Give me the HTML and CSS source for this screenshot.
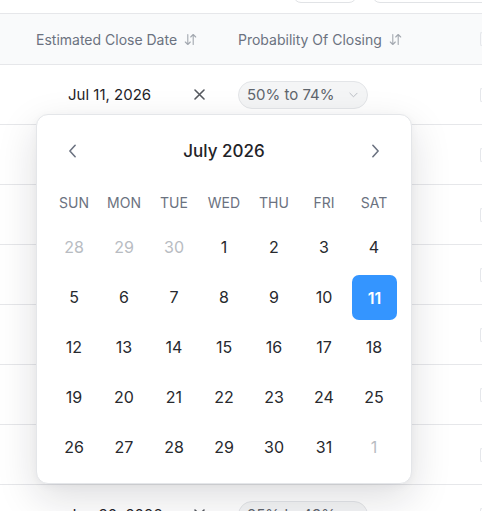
FILE: index.html
```html
<!DOCTYPE html>
<html>
<head>
<meta charset="utf-8">
<link rel="stylesheet" href="styles.css">
</head>
<body>
<div class="page">
  <div class="toolbar">
    <span class="tbtn tbtn-a"></span>
    <span class="tbtn tbtn-b"></span>
  </div>
  <div class="thead">
    <div class="cell c1">Estimated Close Date <svg class="sort" viewBox="0 0 13 13" width="13" height="13"><path d="M3.8 1.5v10M1.3 9l2.5 2.5L6.3 9M9.2 11.5v-10M6.7 4l2.5-2.5L11.7 4" fill="none" stroke="#a3a8b0" stroke-width="1.1" stroke-linecap="round" stroke-linejoin="round"/></svg></div>
    <div class="cell c2">Probability Of Closing <svg class="sort" viewBox="0 0 13 13" width="13" height="13"><path d="M3.8 1.5v10M1.3 9l2.5 2.5L6.3 9M9.2 11.5v-10M6.7 4l2.5-2.5L11.7 4" fill="none" stroke="#a3a8b0" stroke-width="1.1" stroke-linecap="round" stroke-linejoin="round"/></svg></div>
    <div class="cell c3"><span class="stub"></span></div>
  </div>
  <div class="row">
    <div class="cell c1"><span class="date">Jul 11, 2026</span><svg class="clear" viewBox="0 0 11 11" width="11" height="11"><path d="M1 1l9 9M10 1l-9 9" stroke="#55595f" stroke-width="1.6" stroke-linecap="round"/></svg></div>
    <div class="cell c2"><span class="pill">50% to 74% <svg viewBox="0 0 10 6" width="9" height="6"><path d="M1 1l4 4 4-4" fill="none" stroke="#b9bdc4" stroke-width="1.1" stroke-linecap="round" stroke-linejoin="round"/></svg></span></div>
    <div class="cell c3"><span class="stub"></span></div>
  </div>
  <div class="row"><div class="cell c1"></div><div class="cell c2"></div><div class="cell c3"><span class="stub"></span></div></div>
  <div class="row"><div class="cell c1"></div><div class="cell c2"></div><div class="cell c3"><span class="stub"></span></div></div>
  <div class="row"><div class="cell c1"></div><div class="cell c2"></div><div class="cell c3"><span class="stub"></span></div></div>
  <div class="row"><div class="cell c1"></div><div class="cell c2"></div><div class="cell c3"><span class="stub"></span></div></div>
  <div class="row"><div class="cell c1"></div><div class="cell c2"></div><div class="cell c3"><span class="stub"></span></div></div>
  <div class="row"><div class="cell c1"></div><div class="cell c2"></div><div class="cell c3"><span class="stub"></span></div></div>
  <div class="row">
    <div class="cell c1"><span class="date">Jun 30, 2026</span><svg class="clear" viewBox="0 0 11 11" width="11" height="11"><path d="M1 1l9 9M10 1l-9 9" stroke="#55595f" stroke-width="1.6" stroke-linecap="round"/></svg></div>
    <div class="cell c2"><span class="pill">25% to 49% <svg viewBox="0 0 10 6" width="9" height="6"><path d="M1 1l4 4 4-4" fill="none" stroke="#b9bdc4" stroke-width="1.1" stroke-linecap="round" stroke-linejoin="round"/></svg></span></div>
    <div class="cell c3"><span class="stub"></span></div>
  </div>

  <div class="picker">
    <div class="cal-head">
      <span class="nav"><svg viewBox="0 0 10 16" width="9" height="14"><path d="M8 1.5L2 8l6 6.5" fill="none" stroke="#6b7280" stroke-width="1.8" stroke-linecap="round" stroke-linejoin="round"/></svg></span>
      <span class="month">July 2026</span>
      <span class="nav"><svg viewBox="0 0 10 16" width="9" height="14"><path d="M2 1.5L8 8l-6 6.5" fill="none" stroke="#6b7280" stroke-width="1.8" stroke-linecap="round" stroke-linejoin="round"/></svg></span>
    </div>
    <div class="weekdays">
      <span>SUN</span><span>MON</span><span>TUE</span><span>WED</span><span>THU</span><span>FRI</span><span>SAT</span>
    </div>
    <div class="days">
      <span class="out">28</span><span class="out">29</span><span class="out">30</span><span>1</span><span>2</span><span>3</span><span>4</span>
      <span>5</span><span>6</span><span>7</span><span>8</span><span>9</span><span>10</span><span class="sel">11</span>
      <span>12</span><span>13</span><span>14</span><span>15</span><span>16</span><span>17</span><span>18</span>
      <span>19</span><span>20</span><span>21</span><span>22</span><span>23</span><span>24</span><span>25</span>
      <span>26</span><span>27</span><span>28</span><span>29</span><span>30</span><span>31</span><span class="out">1</span>
    </div>
  </div>
</div>
</body>
</html>
```

FILE: styles.css
```css
* { box-sizing: border-box; }
html, body { margin: 0; padding: 0; background: #fff; }
body { font-family: Inter, "Noto Sans", sans-serif; color: #1f2328; overflow: hidden; }
.page { position: relative; width: 482px; height: 511px; overflow: hidden; }

.toolbar {
  height: 14px;
  border-bottom: 1px solid #e6e7ea;
  display: flex;
  justify-content: flex-end;
  align-items: flex-end;
  gap: 15px;
  overflow: hidden;
  margin-right: -20px;
}
.tbtn {
  display: block;
  height: 32px;
  margin-bottom: 10px;
  border: 1px solid #e1e3e6;
  border-radius: 8px;
  background: #fff;
  flex: none;
}
.tbtn-a { width: 64px; }
.tbtn-b { width: 130px; }

.thead {
  height: 51px;
  display: flex;
  align-items: center;
  background: #f9fafb;
  border-bottom: 1px solid #e6e7ea;
  font-size: 14px;
  color: #6b7280;
}
.cell { display: flex; align-items: center; flex: none; height: 100%; }
.c1 { width: 222px; padding-left: 36px; }
.c2 { width: 256px; padding-left: 16px; }
.c3 { flex: 1; padding-left: 2px; }
.sort { margin-left: 7px; }
.stub { display: block; width: 6px; height: 14px; border: 1px solid #e5e7eb; border-right: none; border-radius: 2px 0 0 2px; }

.row {
  height: 60px;
  display: flex;
  align-items: center;
  border-bottom: 1px solid #e6e7ea;
  font-size: 15px;
}
.date { margin-left: 32px; color: #1f2328; width: 126px; }
.clear { display: block; }
.pill {
  display: flex;
  align-items: center;
  gap: 14px;
  height: 28px;
  width: 130px;
  padding-left: 8px;
  border: 1px solid #e3e5e8;
  border-radius: 14px;
  background: #f4f5f6;
  color: #5f656d;
  font-size: 15px;
}

.picker {
  position: absolute;
  left: 36px;
  top: 114px;
  width: 376px;
  height: 370px;
  padding: 12px 13px 12px 12px;
  background: #fff;
  border: 1px solid #e4e6e9;
  border-radius: 12px;
  box-shadow: 0 14px 40px rgba(20, 24, 32, 0.14), 0 2px 8px rgba(20, 24, 32, 0.04);
}
.cal-head {
  height: 48px;
  display: flex;
  align-items: center;
  justify-content: space-between;
  padding: 0 6px 0 7px;
}
.nav { width: 32px; height: 32px; display: flex; align-items: center; justify-content: center; }
.month { font-size: 17px; font-weight: 500; color: #1f2328; }
.weekdays {
  margin-top: 8px;
  height: 39px;
  display: grid;
  grid-template-columns: repeat(7, 50px);
  align-items: center;
  font-size: 14px;
  color: #6b7280;
}
.weekdays span, .days span { text-align: center; }
.days {
  display: grid;
  grid-template-columns: repeat(7, 50px);
  grid-auto-rows: 50px;
}
.days span {
  display: flex;
  align-items: center;
  justify-content: center;
  font-size: 16px;
  color: #27292e;
}
.days span.out { color: #b8bcc2; }
.days span.sel {
  margin: 3px 2px 2px 3px;
  background: #3495ff;
  color: #fff;
  font-weight: 600;
  border-radius: 7px;
}
```
